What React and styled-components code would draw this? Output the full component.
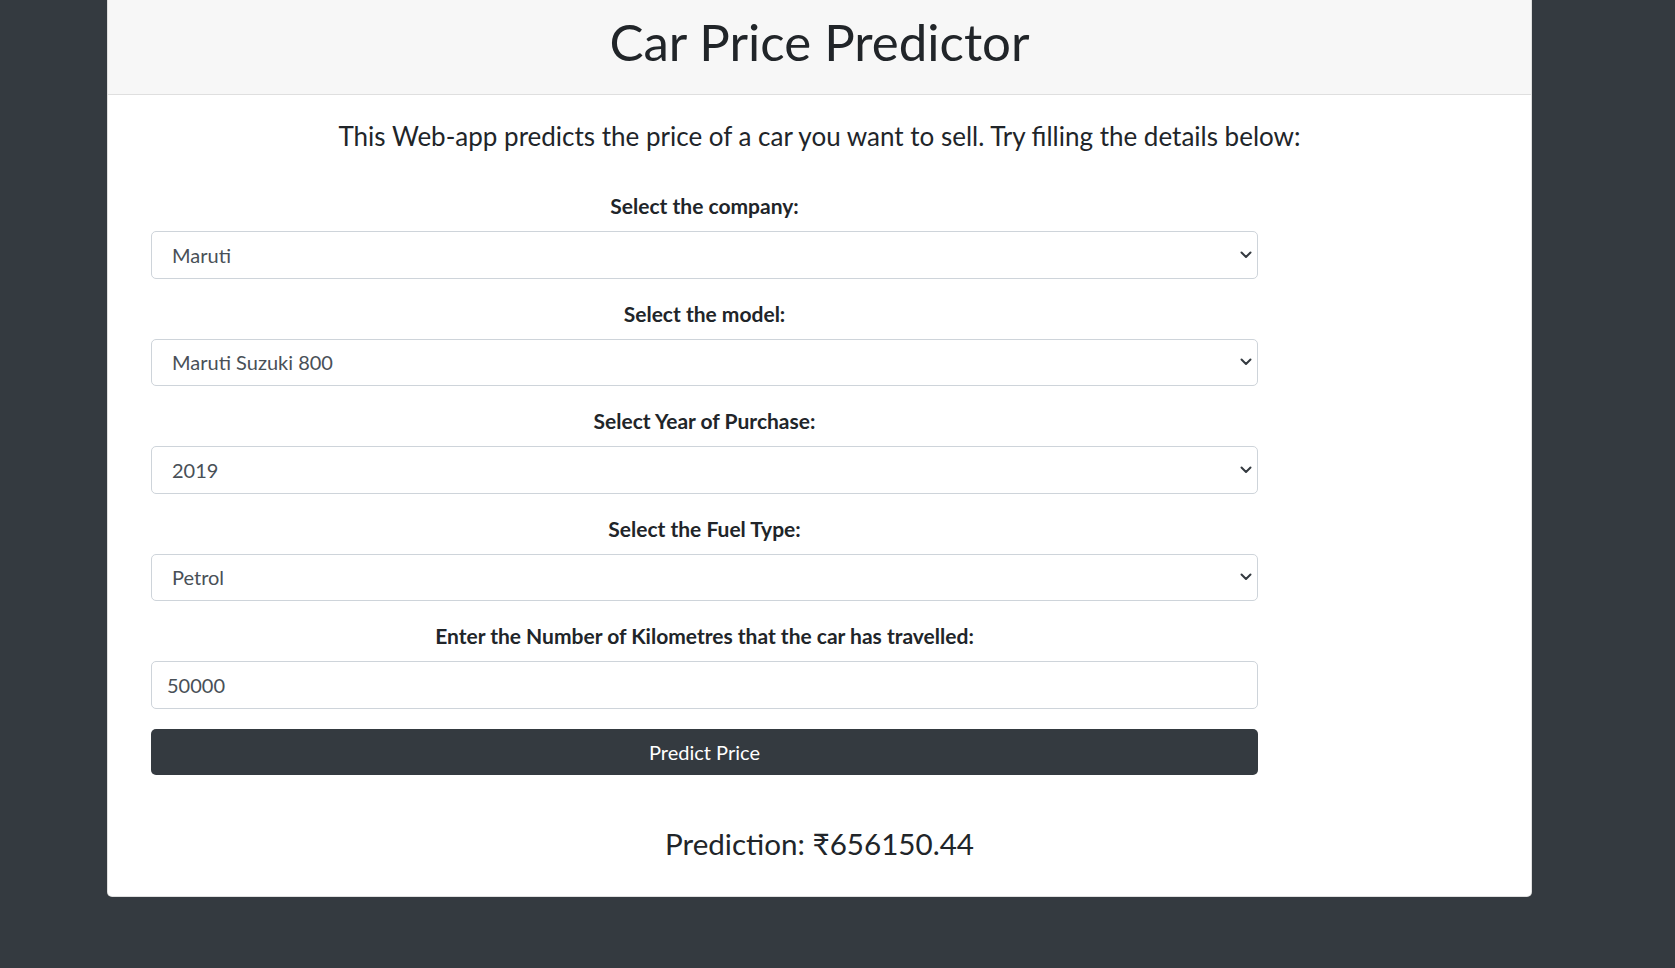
import React from 'react';
import styled, { createGlobalStyle } from 'styled-components';

const GlobalStyle = createGlobalStyle`
  body {
    margin: 0;
    background: #343a40;
    font-family: 'Lato', 'Noto Sans', sans-serif;
    color: #212529;
  }
`;

const fields = [
  { label: 'Select the company:', value: 'Maruti', select: true },
  { label: 'Select the model:', value: 'Maruti Suzuki 800', select: true },
  { label: 'Select Year of Purchase:', value: '2019', select: true },
  { label: 'Select the Fuel Type:', value: 'Petrol', select: true },
  { label: 'Enter the Number of Kilometres that the car has travelled:', value: '50000' },
];

const Chevron = () => (
  <ChevronIcon width="12" height="8" viewBox="0 0 12 8">
    <path d="M1.5 1.5 L6 6 L10.5 1.5" fill="none" stroke="#343a40" strokeWidth="2" strokeLinecap="round" strokeLinejoin="round" />
  </ChevronIcon>
);

const App = () => (
  <Page>
    <GlobalStyle />
    <Card>
      <CardHeader>
        <Title>Car Price Predictor</Title>
      </CardHeader>
      <CardBody>
        <Subtitle>This Web-app predicts the price of a car you want to sell. Try filling the details below:</Subtitle>
        <Form onSubmit={e => e.preventDefault()}>
          {fields.map(f => (
            <FormGroup key={f.label}>
              <Label>{f.label}</Label>
              {f.select ? (
                <SelectWrap>
                  <Select defaultValue={f.value}>
                    <option>{f.value}</option>
                  </Select>
                  <Chevron />
                </SelectWrap>
              ) : (
                <Input type="text" defaultValue={f.value} />
              )}
            </FormGroup>
          ))}
          <PredictButton type="submit">Predict Price</PredictButton>
        </Form>
        <Prediction>Prediction: ₹656150.44</Prediction>
      </CardBody>
    </Card>
  </Page>
);

const Page = styled.div`
  padding-left: 107px;
`;

const Card = styled.div`
  width: 1425px;
  background: #fff;
  border: 1px solid rgba(0, 0, 0, 0.125);
  border-top: none;
  border-radius: 0 0 5px 5px;
  box-sizing: border-box;
`;

const CardHeader = styled.div`
  background: #f7f7f7;
  border-bottom: 1px solid #dfdfdf;
  padding: 12px 0 22px;
  text-align: center;
`;

const Title = styled.h1`
  margin: 0;
  font-size: 51px;
  line-height: 60px;
  font-weight: 400;
  color: #212529;
`;

const CardBody = styled.div`
  padding: 26px 24px 24px;
`;

const Subtitle = styled.h5`
  margin: 0 0 40px;
  font-size: 26px;
  line-height: 30px;
  font-weight: 400;
  text-align: center;
`;

const Form = styled.form`
  margin-left: 19px;
  width: 1107px;
`;

const FormGroup = styled.div`
  margin-bottom: 20px;
`;

const Label = styled.label`
  display: block;
  text-align: center;
  font-size: 21px;
  line-height: 30px;
  font-weight: 700;
  margin-bottom: 10px;
`;

const SelectWrap = styled.div`
  position: relative;
`;

const controlBase = `
  display: block;
  width: 100%;
  height: 47.5px;
  box-sizing: border-box;
  border: 1px solid #ced4da;
  border-radius: 5px;
  background: #fff;
  color: #495057;
  font-family: 'Lato', 'Noto Sans', sans-serif;
  font-size: 20px;
  outline: none;
`;

const Select = styled.select`
  ${controlBase}
  appearance: none;
  padding: 0 40px 0 20px;
`;

const ChevronIcon = styled.svg`
  position: absolute;
  right: 6px;
  top: 50%;
  transform: translateY(-50%);
  pointer-events: none;
`;

const Input = styled.input`
  ${controlBase}
  padding: 0 15px;
`;

const PredictButton = styled.button`
  display: block;
  width: 100%;
  height: 46px;
  border: none;
  border-radius: 5px;
  background: #343a40;
  color: #fff;
  font-family: 'Lato', 'Noto Sans', sans-serif;
  font-size: 20px;
  cursor: pointer;
`;

const Prediction = styled.h4`
  margin: 51px 0 10px;
  font-size: 29.6px;
  line-height: 36px;
  font-weight: 400;
  text-align: center;
`;

export default App;
